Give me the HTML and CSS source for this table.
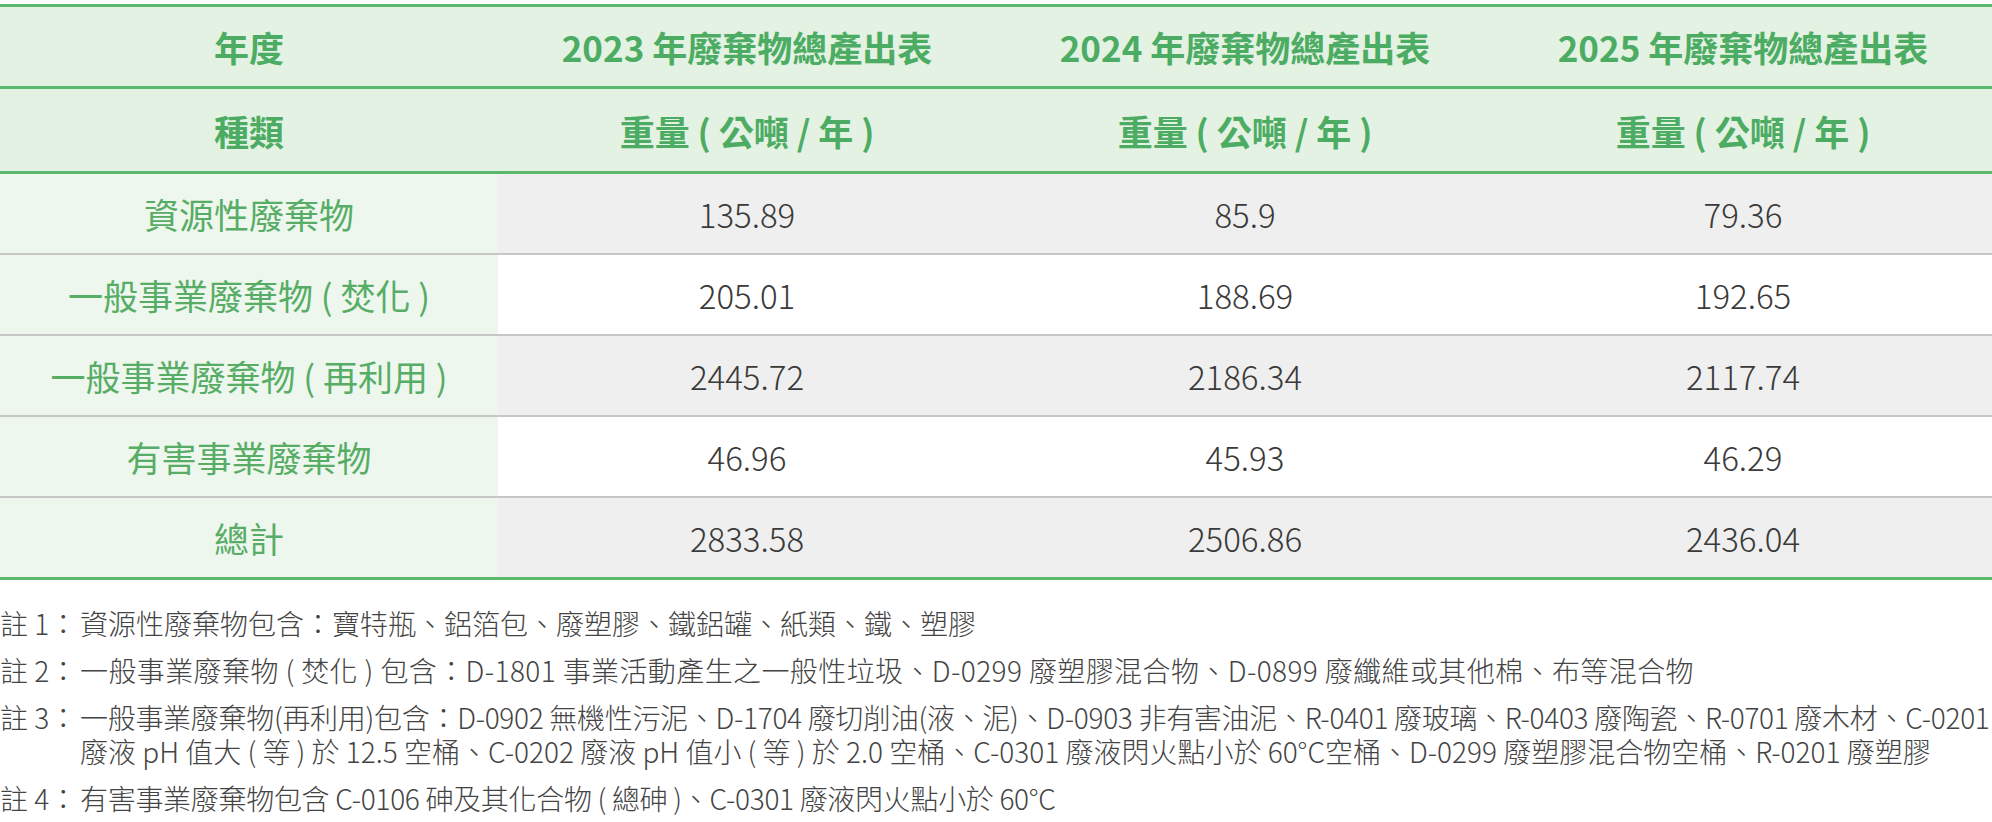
FILE: index.html
```html
<!DOCTYPE html>
<html lang="zh-Hant">
<head>
<meta charset="utf-8">
<title>廢棄物總產出表</title>
<link rel="stylesheet" href="styles.css">
</head>
<body>
<main class="page">
  <table class="waste">
    <colgroup>
      <col class="c"><col class="c"><col class="c"><col class="c">
    </colgroup>
    <thead>
      <tr class="h1">
        <th>年度</th>
        <th>2023 年廢棄物總產出表</th>
        <th>2024 年廢棄物總產出表</th>
        <th>2025 年廢棄物總產出表</th>
      </tr>
      <tr class="h2">
        <th>種類</th>
        <th>重量 ( 公噸 / 年 )</th>
        <th>重量 ( 公噸 / 年 )</th>
        <th>重量 ( 公噸 / 年 )</th>
      </tr>
    </thead>
    <tbody>
      <tr class="odd">
        <th>資源性廢棄物</th><td>135.89</td><td>85.9</td><td>79.36</td>
      </tr>
      <tr class="even">
        <th>一般事業廢棄物 ( 焚化 )</th><td>205.01</td><td>188.69</td><td>192.65</td>
      </tr>
      <tr class="odd">
        <th>一般事業廢棄物 ( 再利用 )</th><td>2445.72</td><td>2186.34</td><td>2117.74</td>
      </tr>
      <tr class="even">
        <th>有害事業廢棄物</th><td>46.96</td><td>45.93</td><td>46.29</td>
      </tr>
      <tr class="odd last">
        <th>總計</th><td>2833.58</td><td>2506.86</td><td>2436.04</td>
      </tr>
    </tbody>
  </table>

  <ul class="notes">
    <li class="note n1"><span class="tag">註 1：</span><span class="body">資源性廢棄物包含：寶特瓶、鋁箔包、廢塑膠、鐵鋁罐、紙類、鐵、塑膠</span></li>
    <li class="note n2"><span class="tag">註 2：</span><span class="body">一般事業廢棄物 ( 焚化 ) 包含：D-1801 事業活動產生之一般性垃圾、D-0299 廢塑膠混合物、D-0899 廢纖維或其他棉、布等混合物</span></li>
    <li class="note n3"><span class="tag">註 3：</span><span class="body"><span class="line tight">一般事業廢棄物(再利用)包含：D-0902 無機性污泥、D-1704 廢切削油(液、泥)、D-0903 非有害油泥、R-0401 廢玻璃、R-0403 廢陶瓷、R-0701 廢木材、C-0201</span><span class="line snug">廢液 pH 值大 ( 等 ) 於 12.5 空桶、C-0202 廢液 pH 值小 ( 等 ) 於 2.0 空桶、C-0301 廢液閃火點小於 60°C空桶、D-0299 廢塑膠混合物空桶、R-0201 廢塑膠</span></span></li>
    <li class="note n4"><span class="tag">註 4：</span><span class="body">有害事業廢棄物包含 C-0106 砷及其化合物 ( 總砷 )、C-0301 廢液閃火點小於 60°C</span></li>
  </ul>
</main>
</body>
</html>
```
FILE: styles.css
```css
html, body {
  margin: 0;
  padding: 0;
  background: #ffffff;
}

.page {
  padding-top: 4px;
  font-family: "Noto Sans CJK TC", "Noto Sans", sans-serif;
}

.waste {
  width: 1992px;
  border-collapse: collapse;
  table-layout: fixed;
}

.waste .c {
  width: 25%;
}

.waste th,
.waste td {
  padding: 0;
  text-align: center;
  vertical-align: middle;
}

.waste thead th {
  background: #e3f2e2;
  color: #4dac63;
  font-weight: 700;
  font-size: 35px;
  border-top: 3px solid #5cb86c;
  border-bottom: 3px solid #5cb86c;
}

.waste .h1 th {
  height: 79px;
}

.waste .h2 th {
  height: 82px;
}

.waste tbody th {
  background: #eef7ee;
  color: #58ad66;
  font-weight: 400;
  font-size: 35px;
  height: 79px;
  border-bottom: 2px solid #c6c6c6;
}

.waste tbody td {
  color: #3a3a3a;
  font-weight: 300;
  font-size: 33px;
  height: 79px;
  border-bottom: 2px solid #c6c6c6;
}

.waste .odd td {
  background: #efefef;
}

.waste .even td {
  background: #ffffff;
}

.waste .last th,
.waste .last td {
  border-bottom: 3px solid #5cb86c;
}

.notes {
  list-style: none;
  margin: 26px 0 0;
  padding: 0;
  color: #444444;
  font-size: 28px;
  font-weight: 300;
  line-height: 34px;
}

.note {
  display: flex;
  margin-bottom: 13px;
}

.tag {
  flex: none;
  width: 80px;
  white-space: nowrap;
}

.body {
  flex: 1;
  display: flex;
  flex-direction: column;
  white-space: nowrap;
}

.n1 .body {
  letter-spacing: 0;
}

.n2 .body {
  letter-spacing: 0.4px;
}

.n4 .body {
  letter-spacing: -0.3px;
}

.tight {
  letter-spacing: -0.3px;
}

.snug {
  letter-spacing: 0;
}
```
